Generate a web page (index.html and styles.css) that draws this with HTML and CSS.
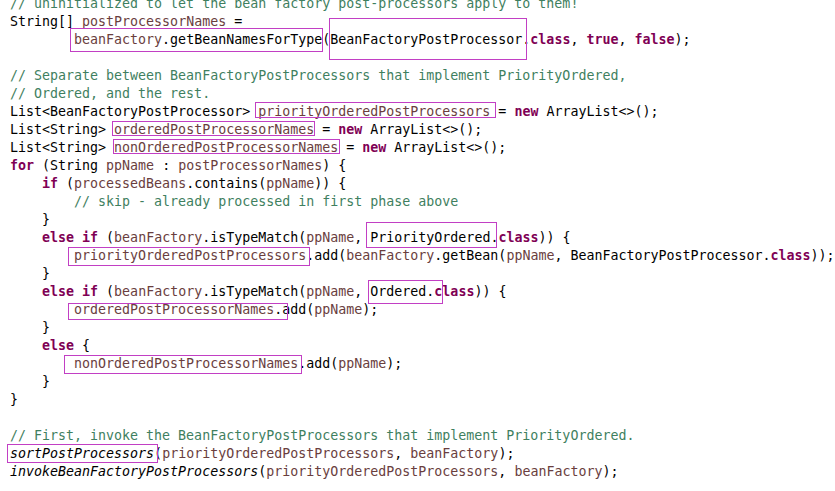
FILE: index.html
```html
<!DOCTYPE html>
<html lang="en">
<head>
    <meta charset="UTF-8">
    <title>PostProcessorRegistrationDelegate</title>
    <link rel="stylesheet" href="styles.css">
</head>
<body>
<div class="editor">
<pre class="code"><span class="cm">// uninitialized to let the bean factory post-processors apply to them!</span>
String[] <span class="lv">postProcessorNames</span> =
        <span class="lv">beanFactory</span>.getBeanNamesForType(BeanFactoryPostProcessor.<span class="kw">class</span>, <span class="kw">true</span>, <span class="kw">false</span>);

<span class="cm">// Separate between BeanFactoryPostProcessors that implement PriorityOrdered,</span>
<span class="cm">// Ordered, and the rest.</span>
List&lt;BeanFactoryPostProcessor&gt; <span class="lv">priorityOrderedPostProcessors</span> = <span class="kw">new</span> ArrayList&lt;&gt;();
List&lt;String&gt; <span class="lv">orderedPostProcessorNames</span> = <span class="kw">new</span> ArrayList&lt;&gt;();
List&lt;String&gt; <span class="lv">nonOrderedPostProcessorNames</span> = <span class="kw">new</span> ArrayList&lt;&gt;();
<span class="kw">for</span> (String <span class="lv">ppName</span> : <span class="lv">postProcessorNames</span>) {
    <span class="kw">if</span> (<span class="lv">processedBeans</span>.contains(<span class="lv">ppName</span>)) {
        <span class="cm">// skip - already processed in first phase above</span>
    }
    <span class="kw">else</span> <span class="kw">if</span> (<span class="lv">beanFactory</span>.isTypeMatch(<span class="lv">ppName</span>, PriorityOrdered.<span class="kw">class</span>)) {
        <span class="lv">priorityOrderedPostProcessors</span>.add(<span class="lv">beanFactory</span>.getBean(<span class="lv">ppName</span>, BeanFactoryPostProcessor.<span class="kw">class</span>));
    }
    <span class="kw">else</span> <span class="kw">if</span> (<span class="lv">beanFactory</span>.isTypeMatch(<span class="lv">ppName</span>, Ordered.<span class="kw">class</span>)) {
        <span class="lv">orderedPostProcessorNames</span>.add(<span class="lv">ppName</span>);
    }
    <span class="kw">else</span> {
        <span class="lv">nonOrderedPostProcessorNames</span>.add(<span class="lv">ppName</span>);
    }
}

<span class="cm">// First, invoke the BeanFactoryPostProcessors that implement PriorityOrdered.</span>
<span class="st">sortPostProcessors</span>(<span class="lv">priorityOrderedPostProcessors</span>, <span class="lv">beanFactory</span>);
<span class="st">invokeBeanFactoryPostProcessors</span>(<span class="lv">priorityOrderedPostProcessors</span>, <span class="lv">beanFactory</span>);</pre>

    <!-- annotation boxes drawn over the code -->
    <div class="mark" style="left:70px;top:28px;width:253px;height:24px"></div>
    <div class="mark" style="left:329px;top:18px;width:198px;height:42px"></div>
    <div class="mark" style="left:255px;top:102px;width:241px;height:16px"></div>
    <div class="mark" style="left:112px;top:121px;width:203px;height:15px"></div>
    <div class="mark" style="left:113px;top:139px;width:227px;height:15px"></div>
    <div class="mark" style="left:366px;top:222px;width:131px;height:26px"></div>
    <div class="mark" style="left:68px;top:247px;width:242px;height:19px"></div>
    <div class="mark" style="left:368px;top:280px;width:75px;height:24px"></div>
    <div class="mark" style="left:68px;top:303px;width:220px;height:17px"></div>
    <div class="mark" style="left:64px;top:355px;width:238px;height:19px"></div>
    <div class="mark" style="left:7px;top:444px;width:151px;height:19px"></div>
</div>
</body>
</html>
```

FILE: styles.css
```css
body {
    margin: 0;
    background-color: #ffffff;
    overflow: hidden;
}
.editor {
    position: relative;
    width: 835px;
    height: 491px;
    overflow: hidden;
}
.code {
    margin: -5px 0 0 0;
    padding-left: 10px;
    font-family: "DejaVu Sans Mono", "Liberation Mono", monospace;
    font-size: 13.3px;
    line-height: 18px;
    color: #000000;
    tab-size: 4;
}
.kw {
    color: #7f0055;
    font-weight: bold;
}
.cm {
    color: #3f7f5f;
}
.lv {
    color: #6a3e3e;
}
.st {
    font-style: italic;
}
.mark {
    position: absolute;
    border: 1px solid #c23fc4;
    box-sizing: border-box;
}
```
